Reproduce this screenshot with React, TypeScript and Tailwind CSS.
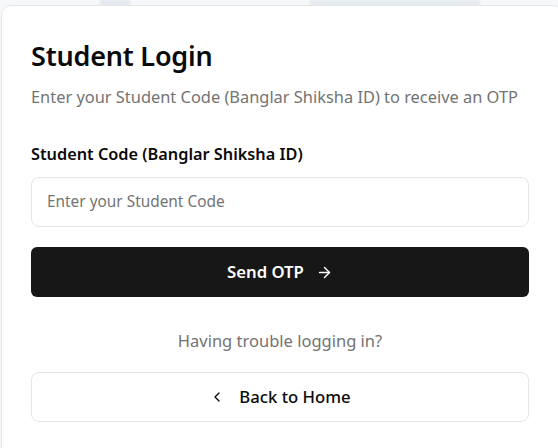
import React from "react";

export default function App() {
  return (
    <div
      className="relative w-[558px] h-[448px] overflow-hidden bg-[#f7f8fa]"
      style={{ fontFamily: '"Segoe UI", "Noto Sans", sans-serif' }}
    >
      <div className="absolute left-[100px] top-0 w-[30px] h-[6px] bg-[#e3e8f0] blur-[1px]" />
      <div className="absolute left-[310px] top-0 w-[170px] h-[6px] bg-[#e6ebf2] blur-[1px]" />
      <div className="relative mt-[5px] ml-[1px] w-[562px] h-[460px] rounded-[10px] border border-[#e6e6e6] bg-white px-[29px] pt-[32px]">
        <h1 className="text-[27px] leading-[36px] font-semibold text-[#0a0a0a] tracking-[-0.2px]">Student Login</h1>
        <p className="mt-[11px] text-[16.4px] leading-[24px] text-[#737373]">
          Enter your Student Code (Banglar Shiksha ID) to receive an OTP
        </p>
        <div className="w-[498px]">
          <label className="block mt-[33px] text-[16.3px] leading-[24px] font-semibold text-[#0a0a0a]">
            Student Code (Banglar Shiksha ID)
          </label>
          <div className="mt-[11px] h-[50px] rounded-[8px] border border-[#e5e5e5] bg-white flex items-center px-[15px] text-[15.4px] text-[#737373]">
            Enter your Student Code
          </div>
          <button className="mt-[20px] w-full h-[50px] rounded-[6px] bg-[#171717] text-white flex items-center justify-center gap-[12px] text-[16.7px] font-semibold">
            <span>Send OTP</span>
            <svg width="17" height="17" viewBox="0 0 24 24" fill="none" stroke="currentColor" strokeWidth="2" strokeLinecap="round" strokeLinejoin="round">
              <path d="M5 12h14" />
              <path d="m12 5 7 7-7 7" />
            </svg>
          </button>
          <p className="mt-[32px] text-center text-[16.5px] leading-[24px] text-[#737373]">Having trouble logging in?</p>
          <button className="mt-[19px] w-full h-[50px] rounded-[8px] border border-[#e5e5e5] bg-white text-[#0a0a0a] flex items-center justify-center gap-[14px] text-[16.7px] font-medium">
            <svg width="16" height="16" viewBox="0 0 24 24" fill="none" stroke="currentColor" strokeWidth="2" strokeLinecap="round" strokeLinejoin="round">
              <path d="m15 18-6-6 6-6" />
            </svg>
            <span>Back to Home</span>
          </button>
        </div>
      </div>
    </div>
  );
}
